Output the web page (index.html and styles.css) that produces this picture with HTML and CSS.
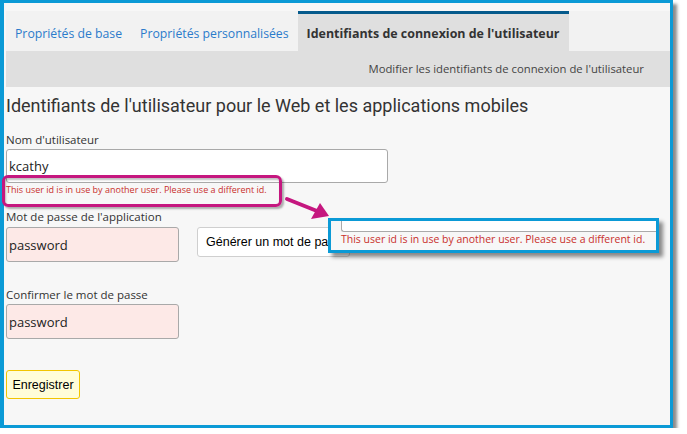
FILE: index.html
```html
<!DOCTYPE html>
<html lang="fr">
<head>
<meta charset="utf-8">
<title>Identifiants de connexion</title>
<link rel="stylesheet" href="styles.css">
</head>
<body>
<div class="frame">
  <div class="tabs">
    <div class="tab">Propriétés de base</div>
    <div class="tab">Propriétés personnalisées</div>
    <div class="tab active">Identifiants de connexion de l'utilisateur</div>
  </div>
  <div class="band">Modifier les identifiants de connexion de l'utilisateur</div>
  <div class="content">
    <h1 class="title">Identifiants de l'utilisateur pour le Web et les applications mobiles</h1>
    <div class="label l1">Nom d'utilisateur</div>
    <div class="input user">kcathy</div>
    <div class="error">This user id is in use by another user. Please use a different id.</div>
    <div class="label l2">Mot de passe de l'application</div>
    <div class="row">
      <div class="input pw">password</div>
      <div class="btn gen">Générer un mot de passe</div>
    </div>
    <div class="label l3">Confirmer le mot de passe</div>
    <div class="input pw pw2">password</div>
    <div class="btn save">Enregistrer</div>
  </div>

  <div class="hilite"></div>
  <svg class="arrow" width="55" height="33" viewBox="0 0 55 33">
    <line x1="7" y1="7" x2="37" y2="19" stroke="#c5177f" stroke-width="4" stroke-linecap="round"/>
    <polygon points="49,24 40,11 31,27" fill="#c5177f"/>
  </svg>
  <div class="callout">
    <div class="strip"></div>
    <div class="callout-text">This user id is in use by another user. Please use a different id.</div>
  </div>
</div>
</body>
</html>
```

FILE: styles.css
```css
html, body {
  margin: 0;
  padding: 0;
  background: #ffffff;
}
.frame {
  position: relative;
  width: 666px;
  height: 414px;
  border: 3px solid #0b9ad6;
  border-left-width: 4px;
  background: #f7f7f7;
  box-shadow: 4px 4px 3px rgba(0, 0, 0, 0.45);
  padding-top: 8px;
  box-sizing: content-box;
  font-family: "Open Sans", "Noto Sans", sans-serif;
  color: #333;
}
.frame > * { box-sizing: border-box; }
.tabs {
  display: flex;
  margin-left: 2px;
  height: 40px;
  background: #f2f2f2;
}
.tab {
  padding: 15px 9px 0;
  font-size: 12.25px;
  line-height: 16px;
  color: #2b7bcb;
  white-space: nowrap;
}
.tab.active {
  border-top: 3px solid #055a8c;
  padding-top: 12px;
  background: #dfdfdf;
  color: #333;
  font-weight: 700;
  font-size: 12.45px;
}
.band {
  margin-left: 2px;
  height: 36px;
  line-height: 36px;
  background: #dfdfdf;
  text-align: right;
  padding-right: 26px;
  font-size: 11.3px;
  color: #444;
}
.content {
  padding-left: 2px;
}
.title {
  margin: 8px 0 0;
  font-family: Roboto, "Open Sans", sans-serif;
  font-weight: 400;
  font-size: 18px;
  line-height: 22px;
  color: #333;
}
.label {
  font-size: 11.5px;
  line-height: 16px;
  color: #333;
}
.l1 { margin-top: 15px; }
.l2 { margin-top: 12px; }
.l3 { margin-top: 25px; }
.input {
  box-sizing: border-box;
  border: 1px solid #a9a9a9;
  border-radius: 3px;
  background: #fff;
  padding-left: 2px;
  display: flex;
  align-items: center;
  color: #222;
  font-size: 13px;
}
.user {
  margin-top: 1px;
  width: 382px;
  height: 34px;
}
.error {
  font-size: 9px;
  line-height: 14px;
  color: #c9302c;
}
.row {
  display: flex;
  margin-top: 2px;
  align-items: flex-start;
}
.pw {
  width: 173px;
  height: 35px;
  background: #fde9e7;
}
.pw2 { margin-top: 1px; }
.btn {
  box-sizing: border-box;
  border-radius: 3px;
  font-family: "Liberation Sans", Arial, sans-serif;
  font-size: 12.5px;
  color: #000;
  display: flex;
  align-items: center;
  white-space: nowrap;
  overflow: hidden;
}
.gen {
  margin-left: 18px;
  width: 153px;
  height: 30px;
  padding-left: 8px;
  background: #fff;
  border: 1px solid #cfcfcf;
}
.save {
  margin-top: 31px;
  width: 74px;
  height: 29px;
  justify-content: center;
  background: #fffdd8;
  border: 1px solid #f2c500;
}
.hilite {
  position: absolute;
  left: -2px;
  top: 172px;
  width: 280px;
  height: 32px;
  border: 3px solid #c5177f;
  border-radius: 6px;
  box-shadow: 2px 2px 2px rgba(0, 0, 0, 0.3), inset 1px 2px 2px rgba(0, 0, 0, 0.25);
}
.arrow {
  position: absolute;
  left: 276px;
  top: 189px;
}
.callout {
  position: absolute;
  left: 324px;
  top: 215px;
  width: 331px;
  height: 35px;
  border: 3px solid #0b9ad6;
  background: #f7f7f7;
  box-shadow: 4px 4px 4px rgba(0, 0, 0, 0.45);
  overflow: hidden;
}
.strip {
  margin-left: 10px;
  height: 10px;
  background: #fff;
  border-left: 1px solid #aaa;
  border-bottom: 1px solid #aaa;
  border-bottom-left-radius: 3px;
}
.callout-text {
  margin: 1px 0 0 10px;
  font-size: 10.5px;
  line-height: 13px;
  color: #c9302c;
  white-space: nowrap;
}
```
